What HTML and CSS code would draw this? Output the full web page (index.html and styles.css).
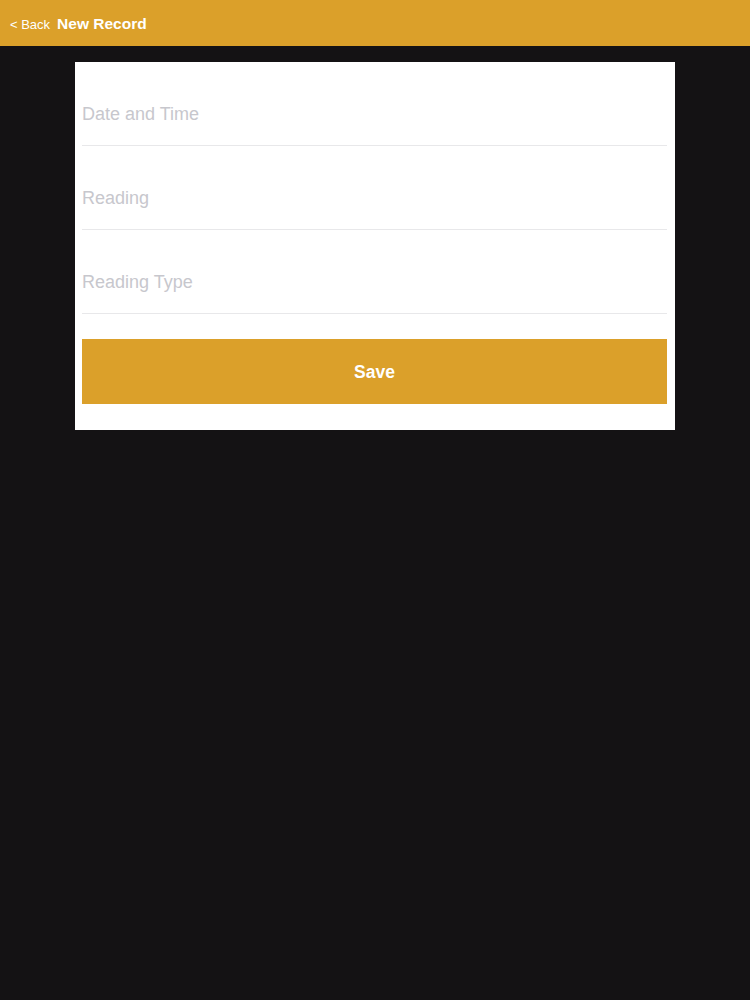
FILE: index.html
```html
<!DOCTYPE html>
<html>
<head>
<meta charset="utf-8">
<link rel="stylesheet" href="styles.css">
</head>
<body>
<header class="topbar">
  <span class="back">&lt; Back</span>
  <span class="title">New Record</span>
</header>
<main class="content">
  <form class="card">
    <div class="field"><input class="input" type="text" placeholder="Date and Time"></div>
    <div class="field"><input class="input" type="text" placeholder="Reading"></div>
    <div class="field"><input class="input" type="text" placeholder="Reading Type"></div>
    <button class="save" type="button">Save</button>
  </form>
</main>
</body>
</html>
```
FILE: styles.css
```css
html, body {
  margin: 0;
  padding: 0;
  background: #141214;
  height: 100%;
  font-family: "Liberation Sans", Arial, sans-serif;
}
.topbar {
  height: 46px;
  background: #dba02a;
  display: flex;
  align-items: center;
  padding: 2px 10px 0;
  box-sizing: border-box;
  color: #fff;
}
.back {
  font-size: 13px;
  margin-right: 7px;
}
.title {
  font-size: 15.5px;
  font-weight: bold;
}
.content {
  display: flex;
  justify-content: center;
  padding-top: 16px;
}
.card {
  width: 600px;
  background: #fff;
  padding: 0 8px 26px 7px;
  box-sizing: border-box;
  margin: 0;
}
.field {
  height: 84px;
  border-bottom: 1px solid #e8e8ea;
  box-sizing: border-box;
  padding-top: 42px;
}
.input {
  display: block;
  width: 100%;
  border: none;
  outline: none;
  padding: 0;
  margin: 0;
  height: 20px;
  line-height: 20px;
  font-family: "Liberation Sans", Arial, sans-serif;
  font-size: 18px;
  color: #333;
  background: transparent;
}
.input::placeholder {
  color: #c7c7cd;
}
.save {
  display: block;
  width: 100%;
  height: 65px;
  margin-top: 25px;
  border: none;
  background: #dba02a;
  color: #fff;
  font-family: "Liberation Sans", Arial, sans-serif;
  font-size: 17.5px;
  font-weight: bold;
  padding: 2px 0 0;
}
```
